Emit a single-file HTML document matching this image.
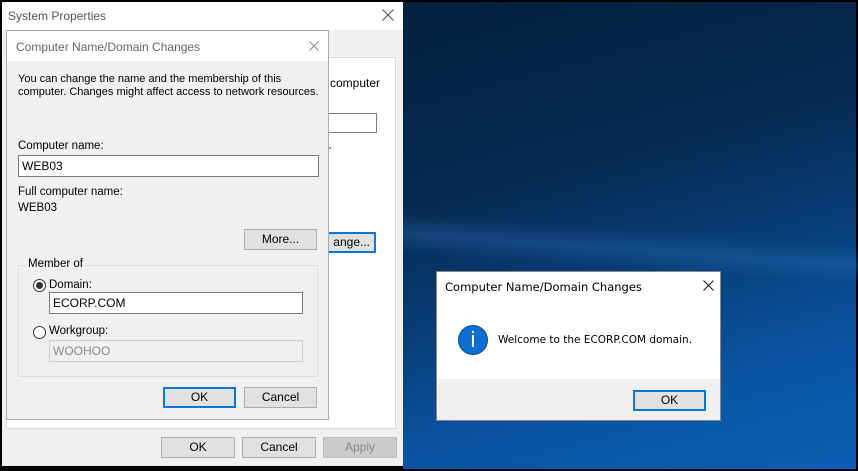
<!DOCTYPE html>
<html><head><meta charset="utf-8"><style>
*{box-sizing:border-box;margin:0;padding:0}
body{width:858px;height:471px;background:#000;position:relative;overflow:hidden;font-family:"Liberation Sans",Arial,sans-serif;font-size:12px;color:#000}
.a{position:absolute}
.btn{position:absolute;background:#e1e1e1;border:1px solid #adadad;text-align:center;font-size:12px;line-height:19px}
.def{border:2px solid #0078d7;line-height:17px}
.inp{position:absolute;background:#fff;border:1px solid #7a7a7a;padding-left:3px;line-height:20px}
</style></head><body>
<div class="a" style="left:403px;top:2px;width:453px;height:467px;background:linear-gradient(165deg,#05203f 0%,#062a52 35%,#073c74 55%,#0a54a2 78%,#0b5fb5 100%)"></div>
<div class="a" style="left:380px;top:230px;width:520px;height:40px;transform:rotate(4deg);background:linear-gradient(180deg,rgba(50,120,200,0) 0%,rgba(50,120,200,.3) 50%,rgba(50,120,200,0) 100%)"></div>
<!-- System properties -->
<div class="a" style="left:2px;top:2px;width:401px;height:464px;background:#f0f0f0">
 <div class="a" style="left:0;top:0;width:401px;height:28px;background:#fff"></div>
 <div class="a" style="left:6px;top:7px;color:#555;font-size:12px">System Properties</div>
 <svg class="a" style="left:380px;top:7px" width="12" height="12"><path d="M0.5 0.5L11.5 11.5M11.5 0.5L0.5 11.5" stroke="#555" stroke-width="1.2"/></svg>
 <div class="a" style="left:4px;top:55px;width:390px;height:372px;background:#fff;border:1px solid #d9d9d9"></div>
 <div class="a" style="left:328px;top:74px">computer</div>
 <div class="a" style="left:320px;top:111px;width:55px;height:20px;border:1px solid #7a7a7a;background:#fff"></div>
 <div class="a" style="left:326px;top:138px">·</div>
 <div class="btn def" style="left:310px;top:230px;width:64px;height:21px;text-align:right;padding-right:4px">ange...</div>
 <div class="btn" style="left:159px;top:435px;width:74px;height:21px">OK</div>
 <div class="btn" style="left:240px;top:435px;width:74px;height:21px">Cancel</div>
 <div class="btn" style="left:321px;top:435px;width:74px;height:21px;color:#888;background:#ccc;border-color:#bfbfbf">Apply</div>
</div>
<!-- Inner dialog -->
<div class="a" style="left:6px;top:30px;width:323px;height:390px;background:#f0f0f0;border:1px solid #aaa">
 <div class="a" style="left:0;top:0;width:321px;height:30px;background:#fff"></div>
 <div class="a" style="left:9px;top:9px;color:#666">Computer Name/Domain Changes</div>
 <svg class="a" style="left:302px;top:10px" width="10" height="10"><path d="M0.5 0.5L9.5 9.5M9.5 0.5L0.5 9.5" stroke="#888" stroke-width="1"/></svg>
 <div class="a" style="left:11px;top:42px;line-height:13px;font-size:11px;white-space:nowrap">You can change the name and the membership of this<br>computer. Changes might affect access to network resources.</div>
 <div class="a" style="left:11px;top:109px;font-size:11.5px">Computer name:</div>
 <div class="inp" style="left:11px;top:124px;width:301px;height:22px">WEB03</div>
 <div class="a" style="left:11px;top:155px;font-size:11.5px">Full computer name:</div>
 <div class="a" style="left:11px;top:171px;font-size:11.5px">WEB03</div>
 <div class="btn" style="left:237px;top:198px;width:73px;height:21px">More...</div>
 <div class="a" style="left:11px;top:234px;width:300px;height:112px;border:1px solid #dcdcdc"></div>
 <div class="a" style="left:19px;top:227px;background:#f0f0f0;padding:0 2px;font-size:11.5px">Member of</div>
 <div class="a" style="left:26px;top:248px;width:13px;height:13px;border:1px solid #333;border-radius:50%;background:#fff"><div class="a" style="left:2px;top:2px;width:7px;height:7px;border-radius:50%;background:#333"></div></div>
 <div class="a" style="left:42px;top:248px;font-size:11.5px">Domain:</div>
 <div class="inp" style="left:42px;top:261px;width:254px;height:22px">ECORP.COM</div>
 <div class="a" style="left:26px;top:295px;width:13px;height:13px;border:1px solid #333;border-radius:50%;background:#fff"></div>
 <div class="a" style="left:42px;top:294px;font-size:11.5px">Workgroup:</div>
 <div class="inp" style="left:42px;top:309px;width:254px;height:22px;border-color:#ccc;color:#888;background:#f0f0f0">WOOHOO</div>
 <div class="btn def" style="left:156px;top:356px;width:73px;height:21px">OK</div>
 <div class="btn" style="left:237px;top:356px;width:73px;height:21px">Cancel</div>
</div>
<!-- Message box -->
<div class="a" style="left:436px;top:271px;width:285px;height:150px;background:#fff;border:1px solid #888">
 <div class="a" style="left:8px;top:8px;font-family:'DejaVu Sans',sans-serif;font-size:11.5px">Computer Name/Domain Changes</div>
 <svg class="a" style="left:266px;top:8px" width="11" height="11"><path d="M0.5 0.5L10.5 10.5M10.5 0.5L0.5 10.5" stroke="#222" stroke-width="1.1"/></svg>
 <div class="a" style="left:21px;top:53px;width:30px;height:30px;border-radius:50%;background:#0a6fd0;border:1px solid #05508f;color:#fff;text-align:center;font-size:22px;line-height:28px">i</div>
 <div class="a" style="left:61px;top:62px;font-family:'DejaVu Sans',sans-serif;font-size:10.5px">Welcome to the ECORP.COM domain.</div>
 <div class="a" style="left:0;top:107px;width:283px;height:41px;background:#f0f0f0"></div>
 <div class="btn def" style="left:196px;top:118px;width:73px;height:21px">OK</div>
</div>
</body></html>
